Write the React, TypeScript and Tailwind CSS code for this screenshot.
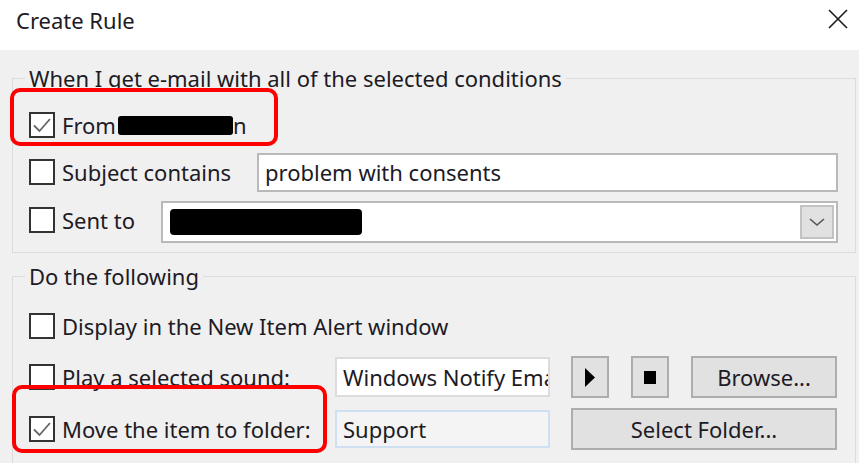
const Checkbox = ({ checked }: { checked?: boolean }) => (
  <div className="w-[26px] h-[26px] shrink-0 border-2 border-[#333333] bg-white flex items-center justify-center">
    {checked && (
      <svg width="20" height="20" viewBox="0 0 20 20">
        <path d="M2 10.5 L7.5 16 L18 4" fill="none" stroke="#666666" strokeWidth="1.8" />
      </svg>
    )}
  </div>
);

const Btn = ({ className, children }: { className: string; children: React.ReactNode }) => (
  <div className={`h-[42px] shrink-0 bg-[#e1e1e1] border-2 border-[#adadad] flex items-center justify-center ${className}`}>
    {children}
  </div>
);

const App = () => {
  return (
    <div
      className="w-[859px] h-[463px] overflow-hidden bg-[#f0f0f0] text-[#201a24] text-[22px] leading-[28px]"
      style={{ fontFamily: '"Noto Sans", "Open Sans", sans-serif' }}
    >
      {/* title bar */}
      <div className="h-[50px] bg-white flex items-start justify-between pl-[16px] pr-[10px] pt-[6px]">
        <span>Create Rule</span>
        <svg width="22" height="22" viewBox="0 0 22 22" className="mt-[2px]">
          <path d="M2 2 L20 20 M20 2 L2 20" stroke="#1a1a1a" strokeWidth="1.6" />
        </svg>
      </div>

      <div className="relative pl-[12px] pr-[3px] pt-[14px]">
        <fieldset className="border border-[#dcdcdc] pl-[16px] pr-[17px] pt-[10px] pb-[8px]">
          <legend className="ml-[-4px] px-[4px]">When I get e-mail with all of the selected conditions</legend>
          <div className="h-[46px] flex items-center">
            <Checkbox checked />
            <span className="ml-[7px]">From</span>
            <span className="ml-[2px] w-[115px] h-[19px] bg-black rounded-[3px]" />
            <span>n</span>
          </div>
          <div className="h-[48px] flex items-center">
            <Checkbox />
            <span className="ml-[7px] w-[195px]">Subject contains</span>
            <div className="flex-1 h-[39px] bg-white border-2 border-[#b9b9b9] flex items-center pl-[6px]">
              problem with consents
            </div>
          </div>
          <div className="h-[48px] flex items-center">
            <Checkbox />
            <span className="ml-[7px] w-[99px]">Sent to</span>
            <div className="flex-1 h-[42px] mt-[4px] bg-white border-2 border-[#b9b9b9] flex items-center justify-between pl-[7px] pr-[2px]">
              <span className="w-[192px] h-[26px] bg-black rounded-[4px]" />
              <div className="w-[34px] h-[34px] bg-[#e1e1e1] border-2 border-[#c2c2c2] flex items-center justify-center">
                <svg width="16" height="10" viewBox="0 0 16 10">
                  <path d="M1 2 L8 8 L15 2" fill="none" stroke="#555555" strokeWidth="1.6" />
                </svg>
              </div>
            </div>
          </div>
        </fieldset>

        <fieldset className="mt-[9px] border border-[#dcdcdc] pl-[16px] pr-[17px] pt-[12px] pb-[10px]">
          <legend className="ml-[-4px] px-[4px]">Do the following</legend>
          <div className="h-[48px] flex items-center">
            <Checkbox />
            <span className="ml-[7px]">Display in the New Item Alert window</span>
          </div>
          <div className="h-[54px] flex items-center">
            <Checkbox />
            <span className="ml-[7px] w-[273px]">Play a selected sound:</span>
            <div className="w-[215px] h-[40px] shrink-0 bg-white border-2 border-[#dcdcdc] flex items-center pl-[6px] overflow-hidden whitespace-nowrap">
              Windows Notify Email
            </div>
            <Btn className="w-[38px] ml-[21px]">
              <svg width="10" height="19" viewBox="0 0 10 19">
                <path d="M0 0 L10 9.5 L0 19 Z" fill="#000" />
              </svg>
            </Btn>
            <Btn className="w-[38px] ml-[22px]">
              <div className="w-[12px] h-[13px] bg-black" />
            </Btn>
            <Btn className="w-[146px] ml-[22px]">Browse...</Btn>
          </div>
          <div className="h-[50px] flex items-center">
            <Checkbox checked />
            <span className="ml-[7px] w-[273px]">Move the item to folder:</span>
            <div className="w-[215px] h-[38px] shrink-0 bg-[#f4f4f4] border-2 border-[#cfe0f2] flex items-center pl-[6px]">
              Support
            </div>
            <Btn className="w-[266px] ml-[21px] border-[#0078d7]">Select Folder...</Btn>
          </div>
        </fieldset>

        {/* red highlight marks drawn over the dialog */}
        <div className="absolute left-[10px] top-[38px] w-[268px] h-[58px] border-[4px] border-[#ff0000] rounded-[10px]" />
        <div className="absolute left-[12px] top-[335px] w-[315px] h-[68px] border-[4px] border-[#ff0000] rounded-[10px]" />
      </div>
    </div>
  );
};

export default App;
